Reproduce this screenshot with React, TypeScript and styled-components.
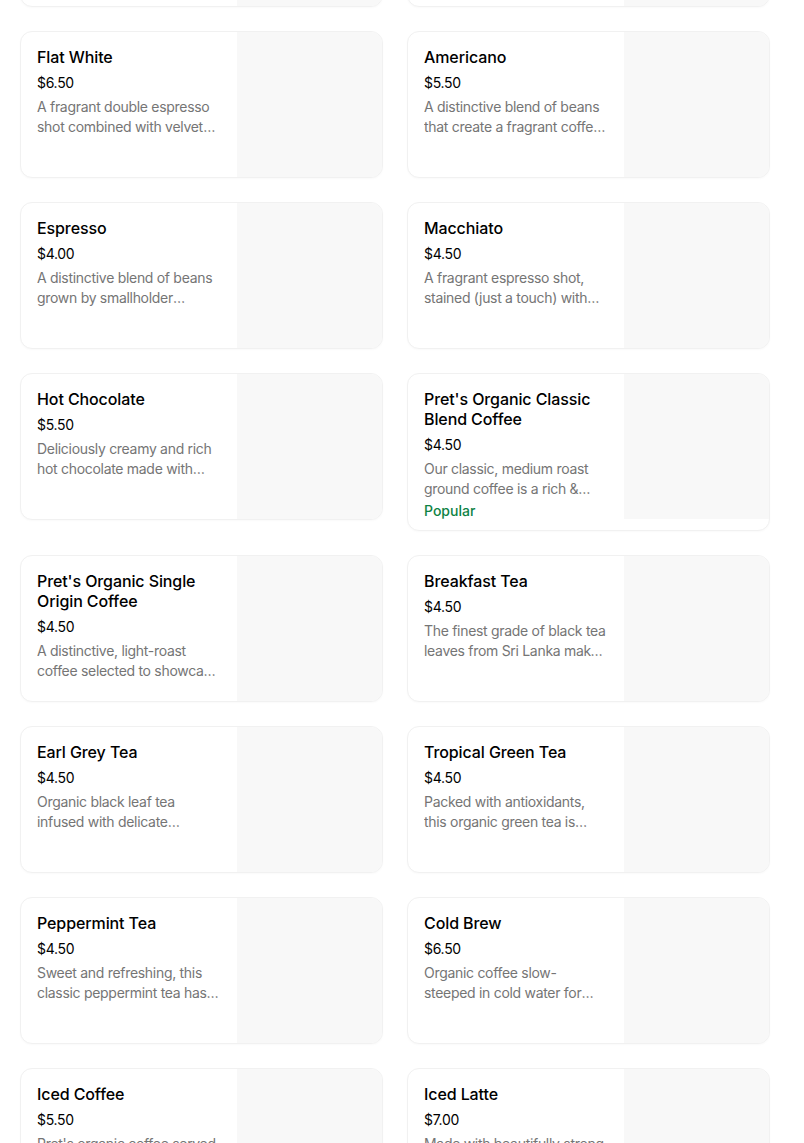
import React from "react";
import styled, { createGlobalStyle } from "styled-components";

type MenuItem = {
  name: string;
  price: string;
  description: string;
  tag?: string;
};

const items: MenuItem[] = [
  {
    name: "Latte",
    price: "$6.50",
    description: "Our organic espresso combined with lots of steamed milk.",
  },
  {
    name: "Cappuccino",
    price: "$6.50",
    description: "A fragrant espresso shot topped with a thick layer of foam.",
  },
  {
    name: "Flat White",
    price: "$6.50",
    description:
      "A fragrant double espresso shot combined with velvety steamed milk for a smooth taste.",
  },
  {
    name: "Americano",
    price: "$5.50",
    description:
      "A distinctive blend of beans that create a fragrant coffee with a smooth finish.",
  },
  {
    name: "Espresso",
    price: "$4.00",
    description:
      "A distinctive blend of beans grown by smallholder farmers across the world.",
  },
  {
    name: "Macchiato",
    price: "$4.50",
    description:
      "A fragrant espresso shot, stained (just a touch) with steamed milk foam.",
  },
  {
    name: "Hot Chocolate",
    price: "$5.50",
    description:
      "Deliciously creamy and rich hot chocolate made with steamed milk.",
  },
  {
    name: "Pret's Organic Classic Blend Coffee",
    price: "$4.50",
    description:
      "Our classic, medium roast ground coffee is a rich & smooth blend of beans.",
    tag: "Popular",
  },
  {
    name: "Pret's Organic Single Origin Coffee",
    price: "$4.50",
    description:
      "A distinctive, light-roast coffee selected to showcase its origin.",
  },
  {
    name: "Breakfast Tea",
    price: "$4.50",
    description:
      "The finest grade of black tea leaves from Sri Lanka make this a classic.",
  },
  {
    name: "Earl Grey Tea",
    price: "$4.50",
    description:
      "Organic black leaf tea infused with delicate bergamot flavours.",
  },
  {
    name: "Tropical Green Tea",
    price: "$4.50",
    description:
      "Packed with antioxidants, this organic green tea is refreshingly light.",
  },
  {
    name: "Peppermint Tea",
    price: "$4.50",
    description:
      "Sweet and refreshing, this classic peppermint tea has a cool finish.",
  },
  {
    name: "Cold Brew",
    price: "$6.50",
    description:
      "Organic coffee slow-steeped in cold water for sixteen hours.",
  },
  {
    name: "Iced Coffee",
    price: "$5.50",
    description: "Pret's organic coffee served over ice with a splash of milk.",
  },
  {
    name: "Iced Latte",
    price: "$7.00",
    description: "Made with beautifully strong organic espresso and cold milk.",
  },
];

const GlobalStyle = createGlobalStyle`
  html, body {
    margin: 0;
    padding: 0;
    background: #ffffff;
    overflow: hidden;
  }
  body {
    font-family: Inter, "Noto Sans", "Liberation Sans", sans-serif;
    -webkit-font-smoothing: antialiased;
  }
`;

const Page = styled.div`
  height: 1143px;
  overflow: hidden;
`;

// list is scrolled: the row above only shows its bottom edge
const Grid = styled.ul`
  list-style: none;
  margin: -140px 0 0 0;
  padding: 0 0 0 20px;
  display: grid;
  grid-template-columns: 363px 363px;
  column-gap: 24px;
  row-gap: 24px;
  align-items: start;
`;

const Card = styled.li`
  display: grid;
  grid-template-columns: 1fr 145px;
  min-height: 145px;
  border: 1px solid #f1f1f1;
  border-radius: 12px;
  box-shadow: 0 1px 2px rgba(0, 0, 0, 0.025);
  overflow: hidden;
  background: #ffffff;
`;

const Info = styled.div`
  display: flex;
  flex-direction: column;
  padding: 15px 16px 9px 16px;
  min-width: 0;
`;

const Title = styled.div`
  font-size: 16px;
  line-height: 20px;
  font-weight: 500;
  color: #000000;
  letter-spacing: -0.1px;
`;

const Price = styled.div`
  margin-top: 6px;
  font-size: 14px;
  line-height: 20px;
  color: #000000;
  letter-spacing: -0.3px;
`;

const Description = styled.div`
  margin-top: 4px;
  font-size: 14px;
  line-height: 20px;
  color: #757575;
  letter-spacing: -0.3px;
  display: -webkit-box;
  -webkit-line-clamp: 2;
  -webkit-box-orient: vertical;
  overflow: hidden;
`;

const Tag = styled.div`
  margin-top: 2px;
  font-size: 14px;
  line-height: 20px;
  font-weight: 500;
  color: #0e8345;
`;

const Thumb = styled.div`
  width: 145px;
  height: 145px;
  background: #f8f8f8;
`;

const ItemCard: React.FC<{ item: MenuItem }> = ({ item }) => (
  <Card>
    <Info>
      <Title>{item.name}</Title>
      <Price>{item.price}</Price>
      <Description>{item.description}</Description>
      {item.tag && <Tag>{item.tag}</Tag>}
    </Info>
    <Thumb />
  </Card>
);

export default function App() {
  return (
    <Page>
      <GlobalStyle />
      <Grid>
        {items.map((item) => (
          <ItemCard key={item.name} item={item} />
        ))}
      </Grid>
    </Page>
  );
}
